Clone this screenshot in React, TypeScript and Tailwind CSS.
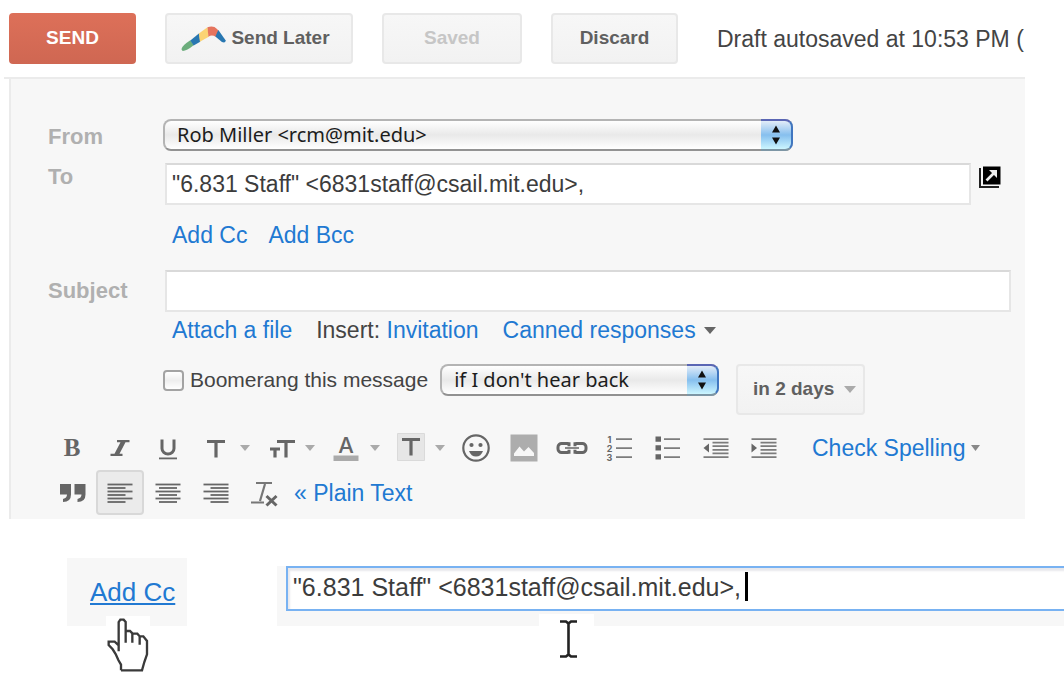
import { useState, type ReactNode } from "react";

const ink = "#666";

function Updown() {
  return (
    <span
      aria-hidden="true"
      className="pointer-events-none absolute inset-y-0 right-0 flex w-8 items-center justify-center rounded-r-lg border-t-2 border-r-2 border-b-2 border-t-[#5a66b4] border-r-[#4076c0] border-b-[#7d96a5] bg-linear-to-b from-[#e2ecf8] via-[#86bfee] to-[#ccf6ff]"
    >
      <svg width="8" height="20" viewBox="0 0 8 20" fill="#111">
        <path d="M4 0.500L8 7.500H0zM4 19.500L8 12.500H0z" />
      </svg>
    </span>
  );
}

function MacSelect({ id, label, options, className }: { id: string; label?: string; options: string[]; className: string }) {
  return (
    <div className={`relative h-8 max-w-full ${className}`}>
      <select
        id={id}
        aria-label={label}
        className="block h-8 w-full appearance-none rounded-lg border-2 border-[#b4b4b4] border-b-[#929292] bg-linear-to-b from-white via-[#e9e9e9] to-white pr-8 pl-3 font-['Noto_Sans','Open_Sans',sans-serif] text-[20px] leading-6 text-[#1c1c1c]"
      >
        {options.map((o) => (
          <option key={o}>{o}</option>
        ))}
      </select>
      <Updown />
    </div>
  );
}

function Caret({ color = "#aaa" }: { color?: string }) {
  return (
    <svg width="12" height="7" viewBox="0 0 12 7" fill={color} aria-hidden="true">
      <path d="M0 0h12L6 7z" />
    </svg>
  );
}

function Tool({ label, children, active, menu }: { label: string; children: ReactNode; active?: boolean; menu?: boolean }) {
  return (
    <button
      type="button"
      aria-label={label}
      aria-pressed={active}
      className={`flex h-[45px] shrink-0 items-center ${
        active ? "rounded-sm border-2 border-[#d8d8d8] bg-[#ebebeb]" : ""
      } ${menu ? "w-[65px]" : "w-12 justify-center"}`}
    >
      <svg
        className={active ? "-m-0.5 shrink-0" : "shrink-0"}
        width="48"
        height="46"
        viewBox="-24 -23 48 46"
        fill={ink}
        stroke="none"
        fontFamily="Inter, sans-serif"
        textAnchor="middle"
        aria-hidden="true"
      >
        {children}
      </svg>
      {menu && (
        <svg width="10" height="6" viewBox="0 0 10 6" fill="#aaa" className="shrink-0" aria-hidden="true">
          <path d="M0 0h10L5 6z" />
        </svg>
      )}
    </button>
  );
}

const rows = [-8.5, -5, -1.5, 2, 5.5, 9];

function Align({ side }: { side: "left" | "center" | "right" }) {
  return (
    <g>
      {rows.map((y, i) => {
        const w = i % 2 === 0 ? 25 : 18;
        const x = side === "left" ? -12.5 : side === "right" ? 12.5 - w : -w / 2;
        return <rect key={y} x={x} y={y - 0.9} width={w} height="1.8" />;
      })}
    </g>
  );
}

function Dent({ d }: { d: string }) {
  return (
    <g>
      <path d="M-12.5-9.800h25v1.700h-25zM-12.500 8.200h25v1.700h-25z" fill="#7c7c7c" />
      <path d="M-3.500-6.300h16v1.800h-16zM-3.500-2.700h16v1.800h-16zM-3.500.9h16v1.800h-16zM-3.500 4.500h16v1.800h-16z" fill="#7c7c7c" />
      <path d={d} />
    </g>
  );
}

const link = "text-[#2179d2] hover:underline";
const grayButton =
  "flex h-[51px] shrink-0 items-center justify-center rounded-sm border-2 border-[#e8e8e8] bg-linear-to-b from-[#f7f7f7] to-[#f2f2f2] text-[19px] font-bold text-[#606060]";
const labelText = "w-[115px] shrink-0 text-[22px] leading-7 font-bold text-[#b0b0b0]";
const field =
  "ml-0.5 h-[42px] min-w-0 flex-1 border-2 border-[#e6e6e6] border-t-[#d9d9d9] bg-white px-[5px] text-[23px] text-[#3c3c3c] outline-none";

export default function App() {
  const [to, setTo] = useState('"6.831 Staff" <6831staff@csail.mit.edu>,');
  const [focusedTo, setFocusedTo] = useState('"6.831 Staff" <6831staff@csail.mit.edu>,');

  return (
    <main className="overflow-hidden bg-white pb-[72px] font-['Liberation_Sans',Arial,sans-serif] text-[#444]">
      <form className="mr-[39px]" onSubmit={(e) => e.preventDefault()}>
        <header className="ml-1 flex items-center overflow-hidden border-b-2 border-[#ebebeb] pt-[13px] pb-[13px] pl-[5px]">
          <button
            type="submit"
            className="h-[51px] w-[127px] shrink-0 rounded-sm bg-linear-to-b from-[#dd7059] to-[#cf6752] text-[19px] font-bold text-white"
          >
            SEND
          </button>
          <button type="button" className={`${grayButton} ml-[29px] w-[188px] gap-1 pr-2`}>
            <svg width="47" height="27" viewBox="540 82 142 82" aria-hidden="true">
              <path fill="#6cad7c" d="M548 161Q534 152 571 128L582 143Q560 161 548 161z" />
              <path fill="#2877b1" d="M571 129L598 107L601 133L581 144z" />
              <path fill="#fbd374" d="M597 108L623 89L627 118L600 133z" />
              <path fill="#e5745e" d="M623 89Q641 82 652 94L659 102L648 118Q636 110 626 118z" />
              <path fill="#2877b1" d="M656 97L678 128Q679 138 667 134L647 117z" />
            </svg>
            Send Later
          </button>
          <button type="button" disabled className={`${grayButton} ml-[29px] w-[140px]`}>
            <span className="text-[#c6c6c6]">Saved</span>
          </button>
          <button type="button" className={`${grayButton} ml-[29px] w-[127px]`}>
            Discard
          </button>
          <p className="ml-[39px] text-[23px] leading-7 whitespace-nowrap">Draft autosaved at 10:53 PM (</p>
        </header>

        <section className="ml-[9px] border-l-2 border-[#ebebeb] bg-[#f7f7f7] pt-10 pb-1 pl-[37px]">
          <div className="flex h-8 items-start">
            <label htmlFor="from" className={`${labelText} pt-1`}>
              From
            </label>
            <MacSelect id="from" options={["Rob Miller <rcm@mit.edu>"]} className="w-[630px]" />
          </div>

          <div className="mt-3 flex items-start pr-6">
            <label htmlFor="to" className={labelText}>
              To
            </label>
            <input id="to" value={to} onChange={(e) => setTo(e.target.value)} className={field} />
            <button type="button" aria-label="Open in new window" className="mt-[3px] ml-2">
              <svg width="22" height="22" viewBox="0 0 22 22" aria-hidden="true">
                <path d="M4 0.500h17.500v18H4z" />
                <path d="M1 2v19h19" fill="none" stroke="#222" strokeWidth="2" />
                <path d="M7.500 14.500L15 7" stroke="#eee" strokeWidth="2.600" fill="none" />
                <path d="M10 4h8v8l-2.500-2.500-3-3z" fill="#eee" />
              </svg>
            </button>
          </div>

          <div className="mt-4 ml-[124px] flex gap-[21px] text-[23px] leading-7">
            <a href="#cc" className={link}>
              Add Cc
            </a>
            <a href="#bcc" className={link}>
              Add Bcc
            </a>
          </div>

          <div className="mt-[21px] flex items-center pr-3.5">
            <label htmlFor="subject" className={labelText}>
              Subject
            </label>
            <input id="subject" className={field} />
          </div>

          <div className="mt-1 ml-[124px] flex items-center gap-6 text-[23px] leading-7 whitespace-nowrap">
            <a href="#attach" className={link}>
              Attach a file
            </a>
            <span>
              Insert:{" "}
              <a href="#invitation" className={link}>
                Invitation
              </a>
            </span>
            <a href="#canned" className={`${link} flex items-center gap-2`}>
              Canned responses
              <Caret color="#666" />
            </a>
          </div>

          <div className="mt-5 ml-[115px] flex items-start">
            <label className="flex h-8 items-center gap-1.5 text-[21px] leading-7 whitespace-nowrap">
              <input
                type="checkbox"
                className="size-[21px] appearance-none rounded-sm border-2 border-[#a3a3a3] bg-linear-to-b from-white via-[#eee] to-white checked:bg-[#4a90d9]"
              />
              Boomerang this message
            </label>
            <MacSelect id="condition" label="Return condition" options={["if I don't hear back"]} className="ml-3 w-[279px]" />
            <button type="button" className={`${grayButton} ml-[17px] w-[129px] gap-2.5 pl-2`}>
              in 2 days
              <Caret />
            </button>
          </div>

          <div role="toolbar" aria-label="Formatting" className="mt-2.5">
            <div className="flex items-center">
              <Tool label="Bold">
                <text x="0" y="8" fontSize="25" fontWeight="700" fontFamily="'Liberation Serif', serif">
                  B
                </text>
              </Tool>
              <Tool label="Italic">
                <path d="M-3-8h12.500v2.300h-4l-6 11.400h3v2.300h-12v-2.300h4l6-11.400h-3.500z" />
              </Tool>
              <Tool label="Underline">
                <path d="M-6-8.500V0.500a6 5.500 0 0 0 12 0V-8.500" fill="none" stroke={ink} strokeWidth="3" />
                <path d="M-9 9.500h18v1.800h-18z" />
              </Tool>
              <Tool label="Font" menu>
                <path d="M-9-6.500H9M0-6.500V9.500" fill="none" stroke={ink} strokeWidth="3.200" />
              </Tool>
              <Tool label="Size" menu>
                <path d="M-4-6.500H14M5-6.500V9.500M-11 1H-1M-6 1V9.500" fill="none" stroke={ink} strokeWidth="3.200" />
              </Tool>
              <Tool label="Text color" menu>
                <text x="0" y="5" fontSize="22" fontWeight="500">
                  A
                </text>
                <path d="M-12.500 7.500h25v5.500h-25z" fill="#aaa" />
              </Tool>
              <Tool label="Highlight color" menu>
                <path d="M-13.500-14.500h27v27h-27z" fill="#e6e6e6" stroke="#dadada" />
                <path d="M-9-8.500H9M0-8.500V7.500" fill="none" stroke={ink} strokeWidth="3.200" />
              </Tool>
              <Tool label="Insert emoticon">
                <circle r="12.700" fill="none" stroke={ink} strokeWidth="2.200" />
                <circle cx="-4.500" cy="-3" r="2.100" />
                <circle cx="4.500" cy="-3" r="2.100" />
                <path d="M-7 3H7Q5 8.500 0 8.500T-7 3z" />
              </Tool>
              <Tool label="Insert image">
                <path d="M-13.500-13.500h27v27h-27z" fill="#adadad" />
                <path d="M-10 8v-2.500L-4.500-1.500l4.500 5 4.500-4.500 5.500 6V8z" fill="#f7f7f7" />
              </Tool>
              <Tool label="Link">
                <path d="M-3.500-4.500H-10a3.500 3.500 0 0 0-4 3.500v2a3.500 3.500 0 0 0 4 3.500h6.500M3.500-4.500H10a3.500 3.500 0 0 1 4 3.500v2a3.500 3.500 0 0 1-4 3.500H3.500M-3-5.800v4M-3 5.800v-4M3-5.800v4M3 5.800v-4" fill="none" stroke={ink} strokeWidth="3" />
                <path d="M-7-1h14v2h-14z" fill="#888" />
              </Tool>
              <Tool label="Numbered list">
                <g fontSize="9" fontWeight="700">
                  <text x="-10.500" y="-5">1</text>
                  <text x="-10.500" y="4">2</text>
                  <text x="-10.500" y="13">3</text>
                </g>
                <path d="M-4-9.800h16v1.700h-16zM-4-.8h16v1.700h-16zM-4 8.200h16v1.700h-16z" fill="#7c7c7c" />
              </Tool>
              <Tool label="Bulleted list">
                <path d="M-12.500-11.500h5.500v5.200h-5.500zM-12.500-2.700h5.500v5.200h-5.500zM-12.500 6.300h5.500v5.200h-5.500z" />
                <path d="M-4-9.800h16v1.700h-16zM-4-.8h16v1.700h-16zM-4 8.200h16v1.700h-16z" fill="#7c7c7c" />
              </Tool>
              <Tool label="Indent less">
                <Dent d="M-7-4.500v9L-12.500 0z" />
              </Tool>
              <Tool label="Indent more">
                <Dent d="M-12.500-4.500v9L-7 0z" />
              </Tool>
              <a href="#spelling" className={`${link} ml-6 flex items-center gap-1.5 text-[23px] leading-7 whitespace-nowrap`}>
                Check Spelling
                <svg width="9" height="6" viewBox="0 0 9 6" fill="#888" aria-hidden="true">
                  <path d="M0 0h9L4.500 6z" />
                </svg>
              </a>
            </div>
            <div className="flex items-center">
              <Tool label="Quote">
                <path d="M-12-9H-1V1.500Q-1 9-9 9V6Q-5 5-5 1.500H-12zM2.500-9h11V1.500Q13.500 9 5.500 9V6Q9.500 5 9.500 1.500H2.500z" />
              </Tool>
              <Tool label="Align left" active>
                <Align side="left" />
              </Tool>
              <Tool label="Align center">
                <Align side="center" />
              </Tool>
              <Tool label="Align right">
                <Align side="right" />
              </Tool>
              <Tool label="Remove formatting">
                <path d="M-8-10H8M1-9L-4 8M-13 9.500H0" fill="none" stroke="#777" strokeWidth="2.200" />
                <path d="M2.500 3l10 9.500M12.500 3l-10 9.500" fill="none" stroke={ink} strokeWidth="3" />
              </Tool>
              <a href="#plain" className={`${link} ml-1.5 text-[23px] leading-7`}>
                « Plain Text
              </a>
            </div>
          </div>
        </section>
      </form>

      <section className="mt-[39px] flex items-start pl-[67px]">
        <div className="relative h-[68px] w-[120px] shrink-0 bg-[#f7f7f7] pt-[18px] pl-[23px] text-[26px] leading-8">
          <a href="#cc" className="text-[#2179d2] underline decoration-2 underline-offset-2">
            Add Cc
          </a>
          <svg className="absolute top-[58px] left-[39px]" width="44" height="58" viewBox="168 228 132 174" aria-hidden="true">
            <path d="M168 228h132v174H168z" fill="#fff" />
            <path
              d="M213 391V374L205 360L197 342L188 328L176 315V305H194L206 316M206 334V246L211 239H221L227 246V308M227 273H240L247 280V308M247 281H262L269 289V314M269 289H280L291 303V343L283 366L276 391H213"
              fill="none"
              stroke="#3a3a3a"
              strokeWidth="7"
            />
          </svg>
        </div>
        <div className="relative mt-2 ml-[90px] h-[60px] min-w-0 flex-1 bg-[#f7f7f7] pl-[9px]">
          <div className="flex h-[45px] items-center border-2 border-r-0 border-[#78b2f2] bg-white pb-1 pl-[5px] shadow-[inset_2px_3px_2px_#e8e8ec]">
            <input
              aria-label="To, focused"
              value={focusedTo}
              onChange={(e) => setFocusedTo(e.target.value)}
              className="field-sizing-content bg-transparent text-[25px] leading-8 text-[#3c3c3c] outline-none"
            />
            <span aria-hidden="true" className="ml-1 h-[29px] w-[3px] bg-black" />
          </div>
          <svg className="absolute top-12 left-[262px]" width="55" height="48" viewBox="0 0 55 48" aria-hidden="true">
            <path d="M0 0h55v48H0z" fill="#fff" />
            <path d="M21 7.500h6l2.500 2 2.500-2h6M21 42.500h6l2.500-2 2.500 2h6M29.500 9v32" fill="none" stroke="#222" strokeWidth="2.600" />
          </svg>
        </div>
      </section>
    </main>
  );
}
